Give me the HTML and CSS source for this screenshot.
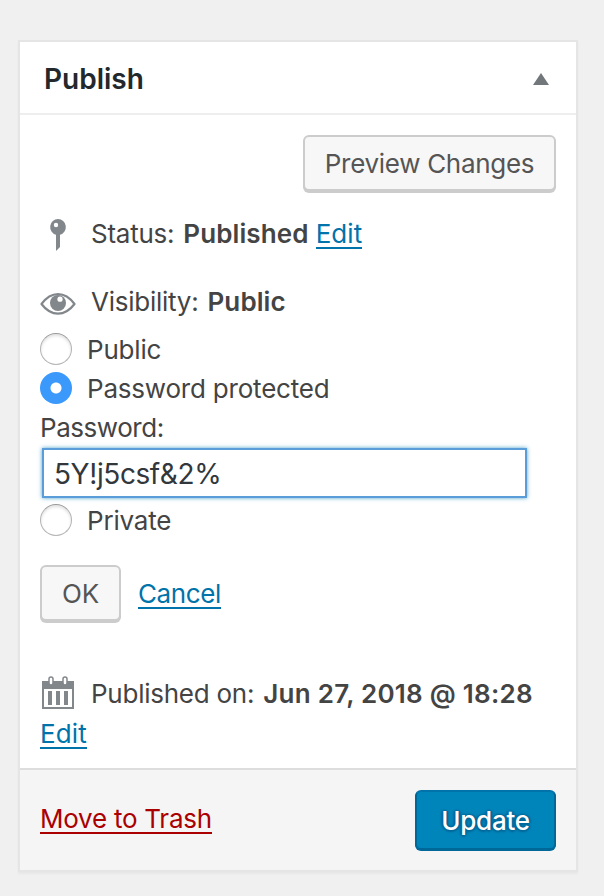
FILE: index.html
```html
<!DOCTYPE html>
<html lang="en">

<head>
    <meta charset="UTF-8">
    <meta name="viewport" content="width=device-width, initial-scale=1.0">
    <title>Publish</title>
    <link rel="stylesheet" href="styles.css">
</head>

<body>

    <form class="postbox">
        <div class="postbox-header">
            <h2>Publish</h2>
            <svg class="toggle" width="16" height="12" viewBox="0 0 16 12">
                <path d="M8 0 L16 12 H0 Z" fill="#72777c" />
            </svg>
        </div>

        <div class="inside">
            <div class="preview-action">
                <button type="button" class="button preview">Preview Changes</button>
            </div>

            <div class="row status">
                <svg class="icon" width="36" height="36" viewBox="0 0 36 36" fill="#82878c">
                    <path fill-rule="evenodd" d="M18 3a8 8 0 0 1 2 15.700V31l-4 4V18.700A8 8 0 0 1 18 3zM16 6.800a2.200 2.200 0 1 0 0 4.400a2.200 2.200 0 1 0 0-4.400z" />
                </svg>
                <span>Status: <b>Published</b> <a href="#">Edit</a></span>
            </div>

            <div class="row visibility">
                <svg class="icon" width="36" height="36" viewBox="0 0 36 36">
                    <path d="M1.500 20C7 12.500 13 10.100 18 10.100S29 12.500 34.500 20C29 27.300 23 29.700 18 29.700S7 27.300 1.500 20z" fill="none" stroke="#82878c" stroke-width="2.200" stroke-linejoin="round" />
                    <circle cx="18" cy="19" r="8" fill="#82878c" />
                    <circle cx="20" cy="15.200" r="2.600" fill="#fff" />
                </svg>
                <span>Visibility: <b>Public</b></span>
            </div>

            <div class="visibility-select">
                <label class="option"><input type="radio" name="visibility"><span>Public</span></label>
                <label class="option"><input type="radio" name="visibility" checked><span>Password protected</span></label>
                <label class="password-label" for="post-password">Password:</label>
                <input type="text" class="password" id="post-password" value="5Y!j5csf&amp;2%">
                <label class="option"><input type="radio" name="visibility"><span>Private</span></label>
            </div>

            <div class="confirm">
                <button type="button" class="button ok">OK</button>
                <a class="cancel" href="#">Cancel</a>
            </div>

            <div class="date">
                <svg class="icon" width="36" height="36" viewBox="0 0 36 36">
                    <path fill="#82878c" fill-rule="evenodd" d="M2 5h32v28H2zM4 13v18h28V13z" />
                    <path fill="#82878c" d="M8 15h4v14H8zM16 15h4v14h-4zM24 15h4v14h-4z" />
                    <rect x="9" y="1" width="4" height="8" rx="2" fill="#fff" stroke="#82878c" stroke-width="1.500" />
                    <rect x="23" y="1" width="4" height="8" rx="2" fill="#fff" stroke="#82878c" stroke-width="1.500" />
                </svg>
                <span class="date-text">Published on: <b>Jun 27, 2018 @ 18:28</b></span>
                <a class="edit-date" href="#">Edit</a>
            </div>
        </div>

        <div class="publishing-actions">
            <a class="trash" href="#">Move to Trash</a>
            <button type="button" class="button primary">Update</button>
        </div>
    </form>

</body>

</html>
```
FILE: styles.css
```css
* {
    box-sizing: border-box;
}

body {
    margin: 0;
    padding: 40px 18px 24px;
    background-color: #f0f0f0;
    color: #444;
    font-family: Inter, "Liberation Sans", sans-serif;
    font-size: 26px;
    line-height: 40px;
    letter-spacing: -0.25px;
    white-space: nowrap;
}

.postbox {
    width: 560px;
    height: 832px;
    border: 2px solid #e5e5e5;
    background: #fff;
    box-shadow: 0 2px 2px rgba(0, 0, 0, 0.04);
}

.postbox-header {
    display: flex;
    align-items: center;
    justify-content: space-between;
    height: 73px;
    padding: 2px 27px 0 24px;
    border-bottom: 2px solid #eee;
}

h2 {
    margin: 0;
    color: #23282d;
    font-size: 28px;
    font-weight: 600;
    letter-spacing: 0;
}

b {
    margin-left: 2px;
    font-weight: 600;
    letter-spacing: 0.1px;
}

a {
    color: #0073aa;
    text-decoration: none;
    line-height: 26px;
    display: inline-block;
    border-bottom: 2px solid #0073aa;
}

.inside {
    height: 653px;
    padding: 20px 20px 0;
}

.preview-action {
    display: flex;
    justify-content: flex-end;
    height: 65px;
}

.button {
    height: 56px;
    padding: 2px 0 0;
    border: 2px solid #ccc;
    border-radius: 6px;
    background: #f7f7f7;
    box-shadow: 0 2px 0 #ccc;
    color: #555;
    font: inherit;
    letter-spacing: inherit;
}

.preview {
    width: 253px;
    letter-spacing: -0.3px;
}

.row {
    display: flex;
    align-items: center;
    gap: 15px;
    height: 68px;
}

.status a {
    letter-spacing: 0.1px;
}

.visibility {
    height: 62px;
    margin-top: 3px;
}

.icon {
    flex: none;
}

.visibility-select {
    display: flex;
    flex-direction: column;
    margin-top: -3px;
}

.option {
    display: flex;
    align-items: center;
    gap: 15px;
    height: 39px;
    letter-spacing: -0.2px;
}

input[type="radio"] {
    appearance: none;
    width: 32px;
    height: 32px;
    margin: 0 0 2px;
    border: 1px solid #b4b4b4;
    border-top-color: #999;
    border-radius: 50%;
    background: #fff;
    box-shadow: inset 0 2px 3px rgba(0, 0, 0, 0.12);
}

input[type="radio"]:checked {
    border: none;
    background: radial-gradient(circle, #fff 5px, #3b99fc 6px);
    box-shadow: none;
}

.password-label {
    height: 40px;
    letter-spacing: -0.45px;
}

.password {
    width: 485px;
    height: 50px;
    margin: 0 0 3px 2px;
    padding: 2px 10px 0;
    border: 2px solid #5b9dd9;
    background: #fff;
    box-shadow: 0 0 4px rgba(30, 140, 190, 0.8);
    color: #32373c;
    font: inherit;
    font-size: 28px;
    letter-spacing: -0.4px;
    outline: none;
}

.confirm {
    display: flex;
    align-items: center;
    gap: 17px;
    height: 56px;
    margin-top: 25px;
}

.cancel {
    margin-top: 4px;
    letter-spacing: -0.4px;
}

.ok {
    width: 81px;
}

.date {
    display: flex;
    flex-wrap: wrap;
    align-items: center;
    column-gap: 15px;
    margin-top: 53px;
}

.date b {
    letter-spacing: 0.25px;
}

.edit-date {
    margin-top: 7px;
    letter-spacing: 0.1px;
}

.publishing-actions {
    display: flex;
    align-items: center;
    justify-content: space-between;
    height: 102px;
    padding: 0 20px;
    border-top: 2px solid #ddd;
    background: #f5f5f5;
}

.trash {
    border-color: #a00;
    color: #a00;
    letter-spacing: -0.25px;
}

.primary {
    width: 141px;
    height: 60px;
    border-color: #0073aa #006799 #006799;
    background: #0085ba;
    box-shadow: 0 1px 0 #006799;
    color: #fff;
    font-weight: 500;
    text-shadow: 0 -1px 2px #006799, 2px 0 2px #006799, 0 2px 2px #006799, -2px 0 2px #006799;
}
```
